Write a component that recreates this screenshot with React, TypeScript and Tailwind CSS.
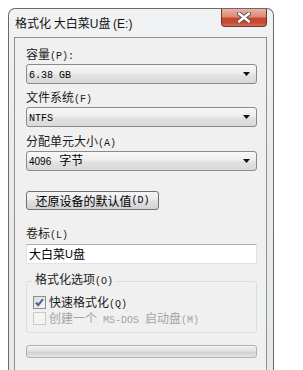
const cjk = "font-['Noto_Sans_CJK_SC','Liberation_Sans',sans-serif]";

// ASCII runs in the dialog's bitmap font are half-width, so draw them in mono at 10px
function Txt({ s, sans = false }: { s: string; sans?: boolean }) {
  return (
    <>
      {s.split(/([\x20-\x7e]+)/).map((p, i) =>
        /^[\x20-\x7e]+$/.test(p) ? (
          <span
            key={i}
            className={
              sans
                ? "font-['Liberation_Sans',sans-serif] text-[11px]"
                : "font-['Liberation_Mono',monospace] text-[10px]"
            }
          >
            {p}
          </span>
        ) : (
          <span key={i}>{p}</span>
        )
      )}
    </>
  );
}

function Label({ s, className = "" }: { s: string; className?: string }) {
  return (
    <div className={`h-[16px] leading-[16px] text-[12px] text-[#1b1b1b] whitespace-nowrap ${className}`}>
      <Txt s={s} />
    </div>
  );
}

function Combo({ children, className = "" }: { children: React.ReactNode; className?: string }) {
  return (
    <div
      className={`w-[231px] h-[20px] rounded-[3px] border border-[#8a8a8a] bg-[linear-gradient(to_bottom,#f7f7f7_0%,#eeeeee_45%,#e2e2e2_55%,#d9d9d9_100%)] flex items-center justify-between pl-[2px] pr-[6px] ${className}`}
    >
      <div className="text-[12px] leading-[16px] text-black whitespace-nowrap">{children}</div>
      <svg width="7" height="4" viewBox="0 0 7 4">
        <path d="M0 0h7L3.5 4z" fill="#111" />
      </svg>
    </div>
  );
}

function Check({ checked, disabled }: { checked?: boolean; disabled?: boolean }) {
  return (
    <div
      className={`w-[13px] h-[13px] border flex items-center justify-center ${
        disabled
          ? "border-[#c9c9c9] bg-[#f4f4f4]"
          : "border-[#8e8f8f] bg-[linear-gradient(135deg,#dcdcdc,#f6f6f6)]"
      }`}
    >
      {checked && (
        <svg width="9" height="9" viewBox="0 0 9 9">
          <path d="M1 4.5l2.2 2.6L8 1.2" stroke="#4a5f97" strokeWidth="2" fill="none" />
        </svg>
      )}
    </div>
  );
}

export default function App() {
  return (
    <div className={`w-[303px] h-[370px] bg-white overflow-hidden pt-[8px] pl-[8px] ${cjk}`}>
      <div className="w-[266px] h-[362px] rounded-t-[7px] border border-b-0 border-[#6a6a6a] bg-[linear-gradient(to_bottom,#f1f2f4,#e9ecef_40%,#e6e9ec)] flex flex-col">
        {/* title bar */}
        <div className="h-[28px] flex items-start justify-between pl-[6px] pr-[6px]">
          <div className="mt-[6px] h-[16px] leading-[16px] text-[12px] text-[#111] whitespace-nowrap">
            格式化 大白菜<span className="font-['Liberation_Sans',sans-serif] text-[12px]">U</span>盘{" "}
            <span className="font-['Liberation_Sans',sans-serif] text-[12px]">(E:)</span>
          </div>
          <div className="w-[46px] h-[18px] rounded-b-[4px] border border-t-0 border-[#6f3b31] bg-[linear-gradient(to_bottom,#eab2a6_0%,#dd8a78_45%,#c9492e_55%,#c74a30_80%,#d8705a_100%)] flex items-center justify-center">
            <svg width="14" height="11" viewBox="0 0 14 11">
              <path d="M2 1.5l10 8M12 1.5l-10 8" stroke="#5a4a48" strokeWidth="4.2" strokeLinecap="round" />
              <path d="M2 1.5l10 8M12 1.5l-10 8" stroke="#fff" strokeWidth="2.4" strokeLinecap="round" />
            </svg>
          </div>
        </div>

        {/* client area */}
        <div className="ml-[5px] w-[253px] flex-1 border border-b-0 border-[#8f8f8f] bg-[#f0f0f0] pl-[11px] flex flex-col">
          <Label s="容量(P):" className="mt-[8px]" />
          <Combo className="mt-[2px]">
            <Txt s="6.38 GB" />
          </Combo>

          <Label s="文件系统(F)" className="mt-[5px]" />
          <Combo className="mt-[2px]">
            <Txt s="NTFS" />
          </Combo>

          <Label s="分配单元大小(A)" className="mt-[6px]" />
          <Combo className="mt-[2px]">
            <span className="font-['Liberation_Sans',sans-serif] text-[10px]">4096</span>
            <span className="ml-[8px]">字节</span>
          </Combo>

          <div className="mt-[20px] w-[133px] h-[19px] rounded-[3px] border border-[#707070] bg-[linear-gradient(to_bottom,#f4f4f4_0%,#ececec_45%,#dedede_55%,#d3d3d3_100%)] flex items-center justify-center text-[12px] leading-[16px] text-black whitespace-nowrap">
            <Txt s="还原设备的默认值(D)" />
          </div>

          <Label s="卷标(L)" className="mt-[15px]" />
          <div className="mt-[3px] w-[231px] h-[20px] border border-[#e2e3ea] border-t-[#abadb3] bg-white pl-[2px] flex items-center text-[12px] leading-[16px] text-black">
            大白菜<span className="font-['Liberation_Sans',sans-serif] text-[11px]">U</span>盘
          </div>

          {/* group box */}
          <div className="relative mt-[17px] w-[231px] rounded-[3px] border border-[#d5dfe5] pt-[12px] pb-[6px] pl-[6px]">
            <div className="absolute left-[5px] -top-[11px] px-[3px] bg-[#f0f0f0]">
              <Label s="格式化选项(O)" />
            </div>
            <div className="h-[16px] flex items-center gap-[3px]">
              <Check checked />
              <Label s="快速格式化(Q)" />
            </div>
            <div className="h-[16px] flex items-center gap-[3px]">
              <Check disabled />
              <Label s="创建一个 MS-DOS 启动盘(M)" className="text-[#a3a3a3]!" />
            </div>
          </div>

          <div className="mt-[12px] w-[231px] h-[13px] rounded-[3px] border border-[#b2b2b2] bg-[linear-gradient(to_bottom,#f4f4f4_0%,#e2e2e2_45%,#d2d2d2_60%,#e6e6e6_100%)]" />
        </div>
      </div>
    </div>
  );
}
